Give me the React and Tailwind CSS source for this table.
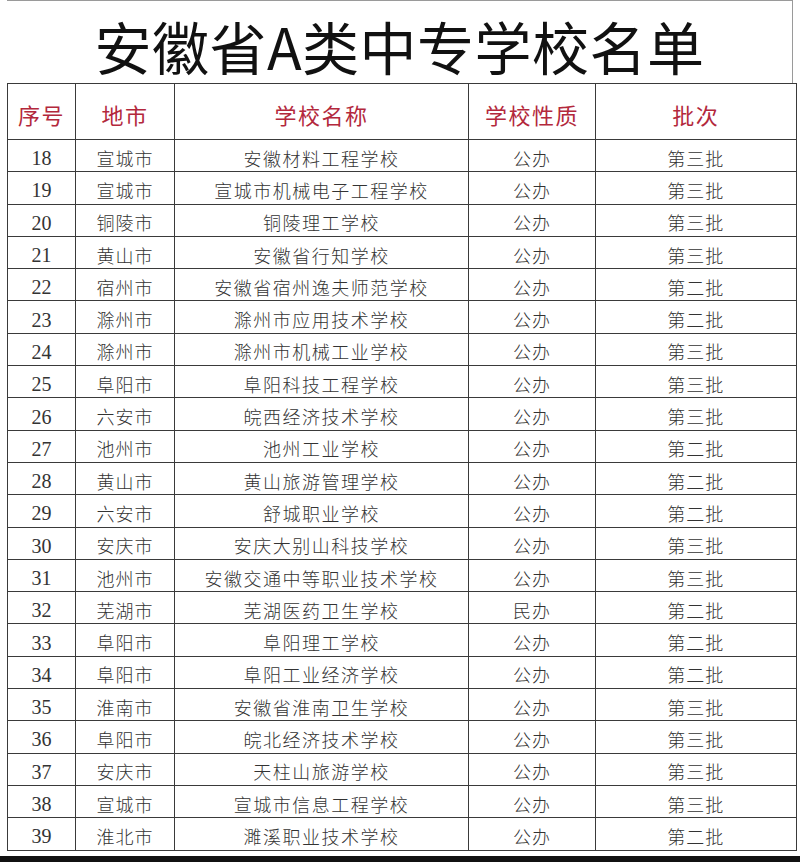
import React from "react";

const rows = [
  ["18", "宣城市", "安徽材料工程学校", "公办", "第三批"],
  ["19", "宣城市", "宣城市机械电子工程学校", "公办", "第三批"],
  ["20", "铜陵市", "铜陵理工学校", "公办", "第三批"],
  ["21", "黄山市", "安徽省行知学校", "公办", "第三批"],
  ["22", "宿州市", "安徽省宿州逸夫师范学校", "公办", "第二批"],
  ["23", "滁州市", "滁州市应用技术学校", "公办", "第二批"],
  ["24", "滁州市", "滁州市机械工业学校", "公办", "第三批"],
  ["25", "阜阳市", "阜阳科技工程学校", "公办", "第三批"],
  ["26", "六安市", "皖西经济技术学校", "公办", "第三批"],
  ["27", "池州市", "池州工业学校", "公办", "第二批"],
  ["28", "黄山市", "黄山旅游管理学校", "公办", "第二批"],
  ["29", "六安市", "舒城职业学校", "公办", "第二批"],
  ["30", "安庆市", "安庆大别山科技学校", "公办", "第三批"],
  ["31", "池州市", "安徽交通中等职业技术学校", "公办", "第三批"],
  ["32", "芜湖市", "芜湖医药卫生学校", "民办", "第二批"],
  ["33", "阜阳市", "阜阳理工学校", "公办", "第二批"],
  ["34", "阜阳市", "阜阳工业经济学校", "公办", "第二批"],
  ["35", "淮南市", "安徽省淮南卫生学校", "公办", "第三批"],
  ["36", "阜阳市", "皖北经济技术学校", "公办", "第三批"],
  ["37", "安庆市", "天柱山旅游学校", "公办", "第三批"],
  ["38", "宣城市", "宣城市信息工程学校", "公办", "第三批"],
  ["39", "淮北市", "濉溪职业技术学校", "公办", "第二批"],
];

const headers = ["序号", "地市", "学校名称", "学校性质", "批次"];

export default function App() {
  const cjk = "font-['Noto_Sans_CJK_SC',sans-serif]";
  const cols = "grid grid-cols-[68px_99px_294px_127px_200.5px]";
  const cell =
    "border-r-[1.5px] border-b-[1.5px] border-[#3a3a3a] flex items-center justify-center leading-none";

  return (
    <div className="w-[800px] h-[862px] bg-white flex flex-col overflow-hidden">
      {/* Title */}
      <div className="shrink-0 mx-[7px] h-[83px] border-t border-r border-[#9a9a9a] flex items-center justify-center pt-[6px]">
        <h1 className={`${cjk} text-[57px] leading-none font-normal text-[#111] tracking-[0.5px]`}>
          安徽省A类中专学校名单
        </h1>
      </div>

      {/* Table */}
      <div className="shrink-0 ml-[7px] w-[790px] border-l-[1.5px] border-t-[1.5px] border-[#3a3a3a]">
        <div className={`${cols} h-[56px]`}>
          {headers.map((h) => (
            <div
              key={h}
              className={`${cell} ${cjk} text-[22px] font-normal text-[#b3283c] tracking-[1.5px] pt-[4px]`}
            >
              {h}
            </div>
          ))}
        </div>
        {rows.map((r) => (
          <div key={r[0]} className={`${cols} h-[32.3px]`}>
            <div className={`${cell} font-['Liberation_Serif',serif] text-[20px] text-[#333] pt-[5px]`}>
              {r[0]}
            </div>
            <div className={`${cell} ${cjk} font-light text-[18px] text-[#333] tracking-[1px] pt-[4px]`}>
              {r[1]}
            </div>
            <div className={`${cell} ${cjk} font-light text-[18px] text-[#333] tracking-[1.5px] pt-[4px]`}>
              {r[2]}
            </div>
            <div className={`${cell} ${cjk} font-light text-[18px] text-[#333] tracking-[1px] pt-[4px]`}>
              {r[3]}
            </div>
            <div className={`${cell} ${cjk} font-light text-[18px] text-[#333] tracking-[1px] pt-[4px]`}>
              {r[4]}
            </div>
          </div>
        ))}
      </div>

      <div className="flex-1" />
      <div className="shrink-0 h-[6px] bg-[#111]" />
    </div>
  );
}
